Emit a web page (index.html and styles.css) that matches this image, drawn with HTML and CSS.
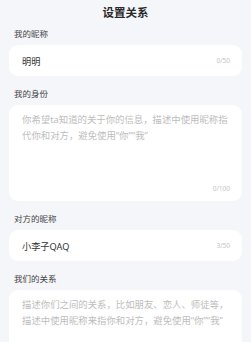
FILE: index.html
```html
<!DOCTYPE html>
<html lang="zh-CN">
<head>
    <meta charset="UTF-8">
    <meta name="viewport" content="width=device-width, initial-scale=1.0">
    <title>设置关系</title>
    <link rel="stylesheet" href="styles.css">
</head>
<body>
    <div class="page">
        <h1 class="title">设置关系</h1>

        <div class="field">
            <div class="label">我的昵称</div>
            <div class="card card-line">
                <span class="value">明明</span>
                <span class="count">0/50</span>
            </div>
        </div>

        <div class="field">
            <div class="label">我的身份</div>
            <div class="card card-area">
                <div class="placeholder">你希望ta知道的关于你的信息，描述中使用昵称指代你和对方，避免使用“你”“我”</div>
                <div class="count">0/100</div>
            </div>
        </div>

        <div class="field">
            <div class="label">对方的昵称</div>
            <div class="card card-line">
                <span class="value">小李子QAQ</span>
                <span class="count">3/50</span>
            </div>
        </div>

        <div class="field">
            <div class="label">我们的关系</div>
            <div class="card card-area card-last">
                <div class="placeholder">描述你们之间的关系，比如朋友、恋人、师徒等，描述中使用昵称来指你和对方，避免使用“你”“我”</div>
            </div>
        </div>
    </div>
</body>
</html>
```

FILE: styles.css
```css
* {
    margin: 0;
    padding: 0;
    box-sizing: border-box;
}

body {
    background-color: #f5f6fa;
    font-family: "Noto Sans", "Noto Sans CJK SC", sans-serif;
    color: #333;
    overflow: hidden;
}

.page {
    padding: 0 9px;
}

.title {
    font-size: 11.5px;
    font-weight: bold;
    color: #2a2a2a;
    text-align: center;
    line-height: 26px;
    margin-bottom: 2px;
}

.field + .field {
    margin-top: 12px;
}

.label {
    font-size: 8.5px;
    line-height: 12px;
    color: #444;
    padding-left: 5px;
    margin-bottom: 5px;
}

.card {
    background-color: #fff;
    border-radius: 9px;
    padding: 0 12px 0 13px;
}

.card-line {
    height: 31px;
    display: flex;
    align-items: center;
    justify-content: space-between;
}

.value {
    font-size: 9.2px;
    color: #333;
}

.count {
    font-size: 6.5px;
    color: #c4c4c4;
}

.card-area {
    height: 96px;
    padding-top: 7px;
    padding-bottom: 8px;
    display: flex;
    flex-direction: column;
    justify-content: space-between;
}

.card-last {
    height: 60px;
    border-radius: 9px 9px 0 0;
}

.card-area .placeholder {
    font-size: 9.4px;
    line-height: 16px;
    color: #bdbdbd;
}

.card-area .count {
    text-align: right;
}
```
